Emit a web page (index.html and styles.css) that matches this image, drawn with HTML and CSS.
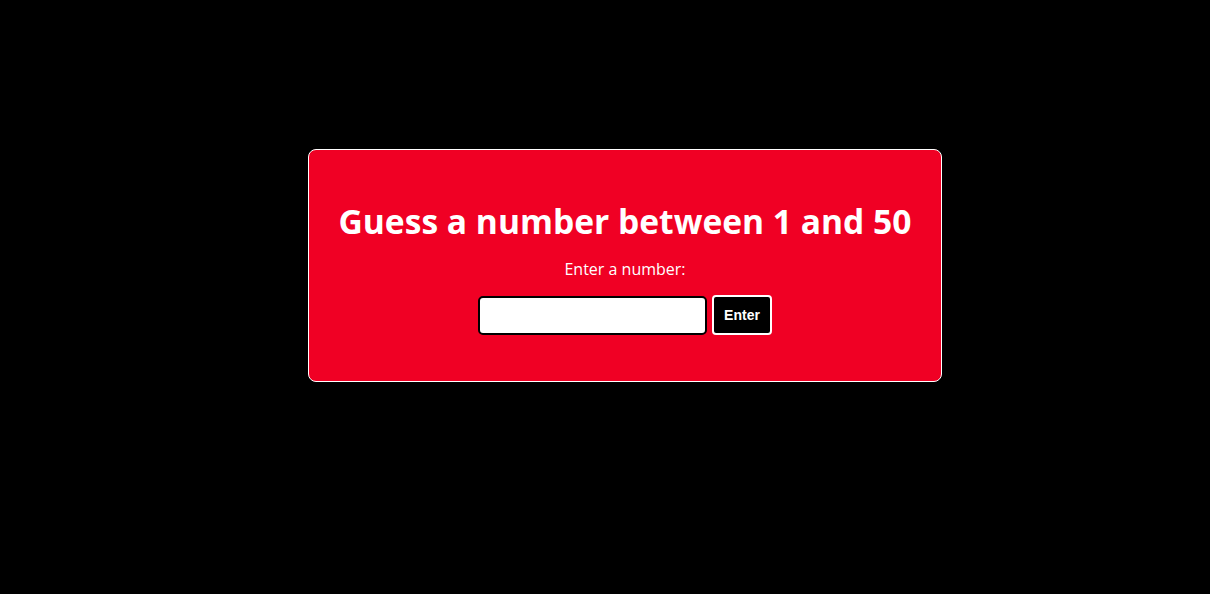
FILE: index.html
```html
<!DOCTYPE html>
<html>
<head>
<meta charset="utf-8">
<link rel="stylesheet" href="styles.css">
</head>
<body>
<div class="page">
  <div class="card">
    <h1 class="title">Guess a number between 1 and 50</h1>
    <label class="label" for="guess">Enter a number:</label>
    <div class="row">
      <input class="field" id="guess" type="text">
      <button class="btn">Enter</button>
    </div>
  </div>
</div>
</body>
</html>
```
FILE: styles.css
```css
html, body {
  margin: 0;
  padding: 0;
  background: #000;
  height: 100%;
}
.page {
  padding: 149px 0 0 40px;
}
.card {
  box-sizing: border-box;
  width: 634px;
  height: 233px;
  margin: 0 auto;
  background: #f00024;
  border: 1px solid #fff;
  border-radius: 8px;
  display: flex;
  flex-direction: column;
  align-items: center;
  padding-top: 48px;
  font-family: "Open Sans", sans-serif;
  color: #fff;
}
.title {
  margin: 0;
  font-size: 33.6px;
  font-weight: 700;
  line-height: 46px;
}
.label {
  margin-top: 14px;
  font-size: 16px;
  line-height: 22px;
}
.row {
  display: flex;
  gap: 5px;
  margin-top: 15px;
  align-items: center;
}
.field {
  box-sizing: border-box;
  width: 229px;
  height: 39px;
  border: 2px solid #000;
  border-radius: 5px;
  background: #fff;
  margin: 0;
}
.btn {
  box-sizing: border-box;
  width: 60px;
  height: 40px;
  background: #000;
  color: #fff;
  border: 2px solid #fff;
  border-radius: 4px;
  font-family: "Liberation Sans", Arial, sans-serif;
  font-weight: 700;
  font-size: 14px;
  padding: 0;
  margin: 0;
}
```
